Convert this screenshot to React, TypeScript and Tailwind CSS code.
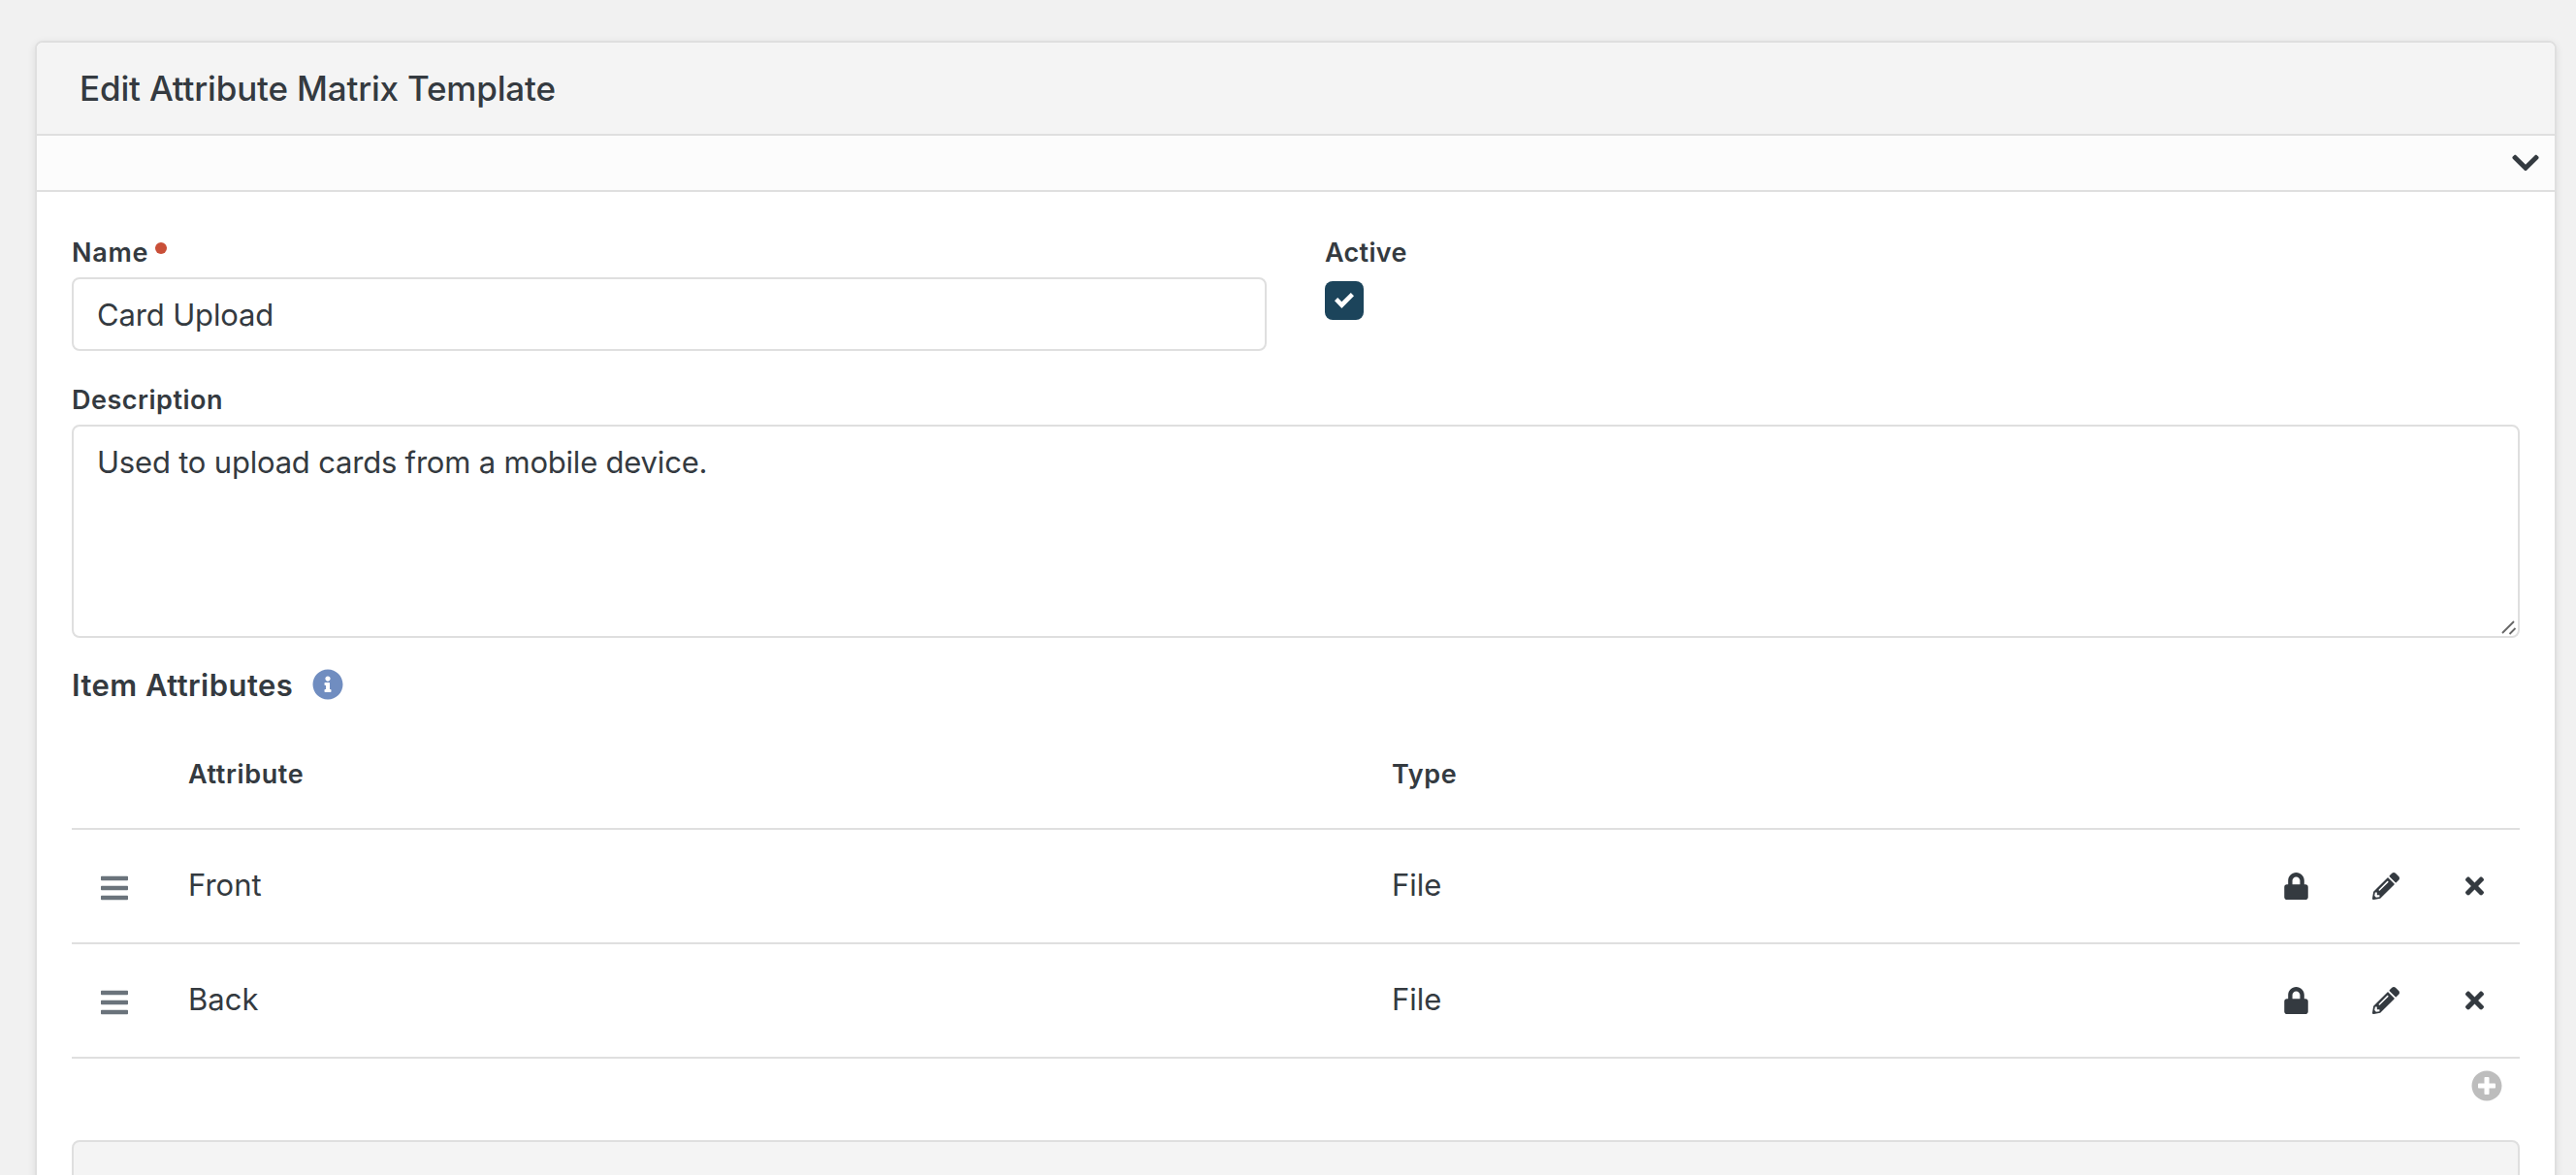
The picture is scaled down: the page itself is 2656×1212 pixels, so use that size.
import { FaLock, FaPencilAlt, FaTimes, FaBars, FaChevronDown, FaInfoCircle, FaPlusCircle } from "react-icons/fa";

const items = [
  { name: "Front", type: "File" },
  { name: "Back", type: "File" },
];

function Row({ name, type }: { name: string; type: string }) {
  return (
    <div className="flex h-[118px] items-center border-b-2 border-[#dfdfdf] text-[31px] leading-[48px]">
      <div className="flex w-[120px] pl-[30px] pt-1 text-[#6a737b]">
        <FaBars size={32} className="w-7" />
      </div>
      <div className="w-[1241px] pb-0.5">{name}</div>
      <div className="flex-1 pb-0.5">{type}</div>
      <div className="flex w-[243px] items-center">
        <FaLock size={28} className="w-[25px]" />
        <FaPencilAlt size={28} className="ml-[66px]" />
        <FaTimes size={28} className="ml-[68px] w-[19px]" />
      </div>
    </div>
  );
}

export default function App() {
  return (
    <div className="h-[1212px] overflow-hidden bg-[#f1f1f1] pl-9 pr-5 pt-[42px] font-['Inter',sans-serif] text-[#343a40]">
      <div className="h-[1300px] rounded-lg border-2 border-[#dfdfdf] bg-white shadow-[0_2px_8px_rgba(0,0,0,0.09)]">
        <div className="flex h-24 items-center rounded-t-md border-b-2 border-[#dfdfdf] bg-[#f4f4f4] pl-11">
          <h1 className="text-[35px] font-medium leading-[44px] tracking-[-0.18px]">Edit Attribute Matrix Template</h1>
        </div>
        <div className="flex h-[58px] items-center justify-end border-b-2 border-[#dfdfdf] bg-[#fcfcfc] pr-4">
          <FaChevronDown size={32} className="w-7" />
        </div>
        <div className="px-9 pt-[42px]">
          <div className="grid grid-cols-[1232px_1fr] gap-[60px]">
            <div>
              <label className="flex h-[46px] items-start text-[27px] font-semibold leading-[42px]">
                <span className="w-[86px] tracking-[0.7px]">Name</span>
                <span className="mt-[10px] size-3 rounded-full bg-[#c94f38]" />
              </label>
              <div className="flex h-[76px] items-center rounded-lg border-2 border-[#dfdfdf] px-6 pt-0.5 text-[31px] tracking-[-0.15px]">Card Upload</div>
            </div>
            <div>
              <div className="h-[50px] text-[27px] font-semibold leading-[42px] tracking-[0.3px]">Active</div>
              <div className="flex size-10 items-center justify-center rounded-lg bg-[#1c445b]">
                <svg width="20" height="16" viewBox="0 0 20 16" fill="#fff"><path d="M0 8.3 3.2 5.1 7.4 9.2 16.8 0 20 3.2 7.4 16Z" /></svg>
              </div>
            </div>
          </div>
          <div className="mt-[30px] h-[46px] text-[27px] font-semibold leading-[42px] tracking-[0.5px]">Description</div>
          <div className="relative h-[220px] rounded-lg border-2 border-[#dfdfdf] px-6 pt-[13px] text-[31px] leading-[48px] tracking-[-0.2px]">
            Used to upload cards from a mobile device.
            <svg className="absolute bottom-[1px] right-[1px]" width="16" height="16" viewBox="0 0 16 16" stroke="#666" strokeWidth="1.8"><path d="M1 14 13 2M8.5 15 14.5 9" /></svg>
          </div>
          <div className="mt-6 flex h-12 items-center text-[31px] font-semibold tracking-[0.45px]">
            <span className="w-[248px] pt-0.5">Item Attributes</span>
            <FaInfoCircle size={32} className="text-[#708dc0]" />
          </div>
          <div className="flex h-[126px] items-center border-b-2 border-[#dfdfdf] pl-[120px] pt-[15px] text-[27px] font-semibold tracking-[0.6px]">
            <div className="w-[1241px]">Attribute</div>
            <div>Type</div>
          </div>
          {items.map((i) => <Row key={i.name} {...i} />)}
          <div className="flex h-[84px] items-start justify-end pr-[18px] pt-3 text-[#bdbdbd]">
            <FaPlusCircle size={32} />
          </div>
          <div className="h-[120px] rounded-lg border-2 border-[#dfdfdf] bg-[#f4f4f4]" />
        </div>
      </div>
    </div>
  );
}
